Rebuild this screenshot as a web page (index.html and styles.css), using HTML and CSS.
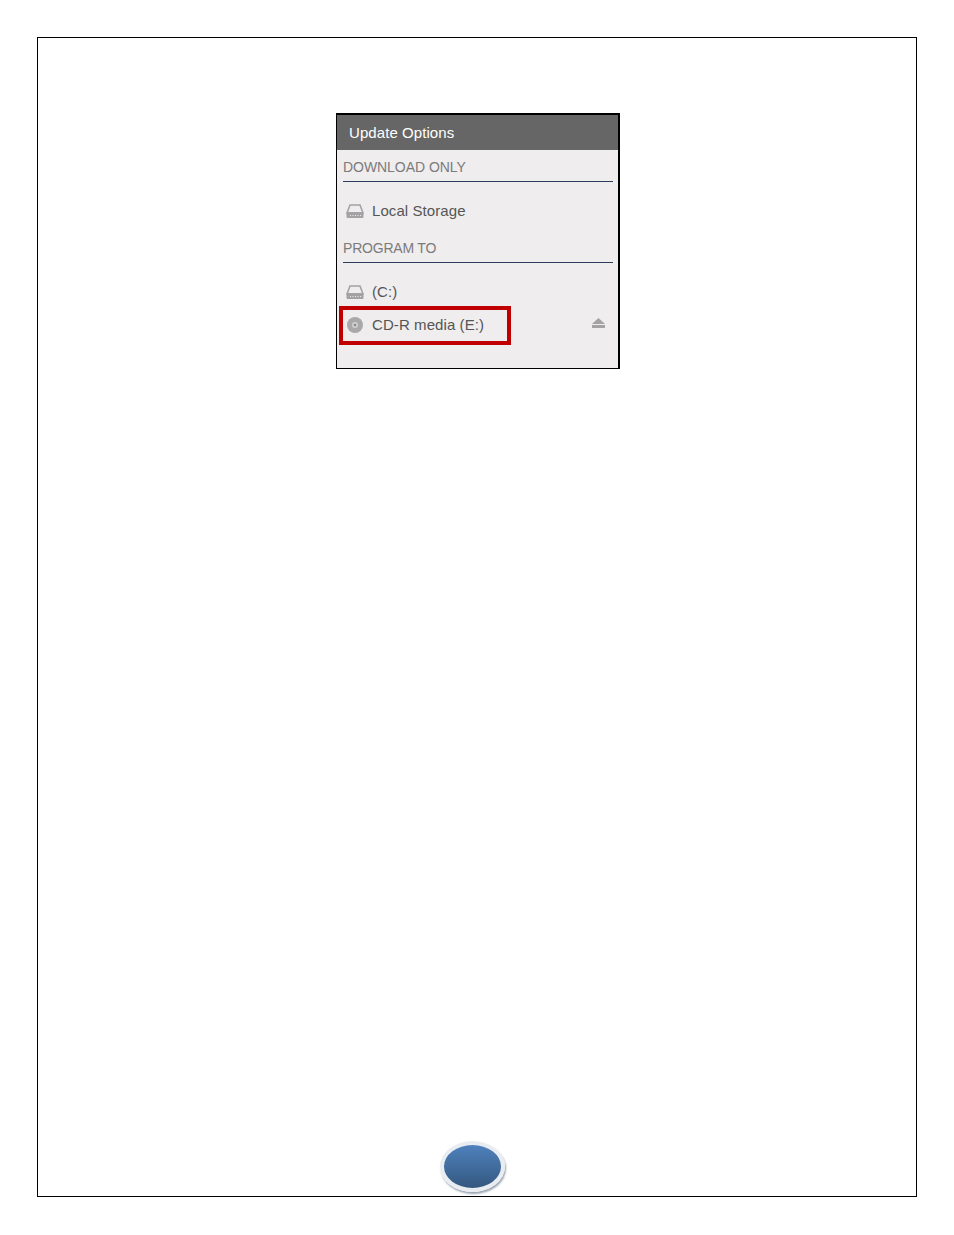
FILE: index.html
```html
<!DOCTYPE html>
<html lang="en">
<head>
<meta charset="utf-8">
<title>Update Options</title>
<link rel="stylesheet" href="styles.css">
</head>
<body>
<div class="page">
	<div class="panel">
		<div class="panel_title">Update Options</div>
		<div class="panel_body">
			<div class="section_head">DOWNLOAD ONLY</div>
			<div class="row row_first">
				<svg class="icon" width="18" height="16" viewBox="0 0 18 16"><path d="M4 2h10l3 8H1z" fill="none" stroke="#a3a3a5" stroke-width="1.6"/><rect x="0.5" y="9" width="17" height="6" rx="1" fill="#a3a3a5"/><path d="M4 12.5h1M6.5 12.5h1M9 12.5h1M11.500 12.5h1M14 12.5h1" stroke="#efedee" stroke-width="1.2"/></svg>
				<span>Local Storage</span>
			</div>
			<div class="section_head section_two">PROGRAM TO</div>
			<div class="row row_first">
				<svg class="icon" width="18" height="16" viewBox="0 0 18 16"><path d="M4 2h10l3 8H1z" fill="none" stroke="#a3a3a5" stroke-width="1.6"/><rect x="0.5" y="9" width="17" height="6" rx="1" fill="#a3a3a5"/><path d="M4 12.5h1M6.5 12.5h1M9 12.5h1M11.500 12.5h1M14 12.5h1" stroke="#efedee" stroke-width="1.2"/></svg>
				<span>(C:)</span>
			</div>
			<div class="row row_cd">
				<svg class="icon" width="18" height="18" viewBox="0 0 18 18"><circle cx="9" cy="9" r="8" fill="#a9a9a9"/><circle cx="9" cy="9" r="3" fill="#d0d0d0"/><circle cx="9" cy="9" r="1.300" fill="#8a8a8a"/></svg>
				<span>CD-R media (E:)</span>
				<svg class="eject" width="13" height="10" viewBox="0 0 13 10"><path d="M6.500 0L13 6H0z" fill="#a3a3a3"/><rect y="7" width="13" height="3" fill="#a3a3a3"/></svg>
				<div class="highlight"></div>
			</div>
		</div>
	</div>
	<div class="oval"></div>
</div>
</body>
</html>
```

FILE: styles.css
```css
html,body{margin:0;padding:0;background:#fff;}
body{font-family:"Liberation Sans",Arial,sans-serif;}
.page{box-sizing:border-box;width:880px;height:1160px;margin:37px 0 0 37px;border:1px solid #000;display:flex;flex-direction:column;align-items:center;}
.panel{box-sizing:border-box;width:284px;height:256px;margin:75px 0 0 2px;border:solid #000;border-width:2px 2px 1px 1px;background:#efedee;}
.panel_title{height:35px;line-height:36px;padding-left:12px;background:#666;color:#fff;font-size:15px;letter-spacing:.07px;}
.panel_body{padding:0 5px 0 6px;}
.section_head{height:31px;line-height:34px;border-bottom:1px solid #2f3d5c;color:#7b7b7b;font-size:14px;letter-spacing:-.05px;}
.row{position:relative;display:flex;align-items:center;color:#555;font-size:15px;letter-spacing:.08px;}
.row_first{height:33px;margin-top:12px;}
.row_first+.section_two{margin-top:4px;letter-spacing:-.2px;}
.row_cd{height:33px;}
.icon{margin:0 8px 0 3px;flex:none;}
.eject{margin:-3px 8px 0 auto;}
.highlight{position:absolute;left:-4px;top:-2px;width:172px;height:39px;box-sizing:border-box;border:4px solid #c00000;}
.oval{box-sizing:border-box;width:65px;height:51px;margin:auto 10px 4px 0;border-radius:50%;background:linear-gradient(#4f81bd,#34587f);border:4px solid #e9edf2;box-shadow:1px 2px 2px #9aa5b3;}
```
